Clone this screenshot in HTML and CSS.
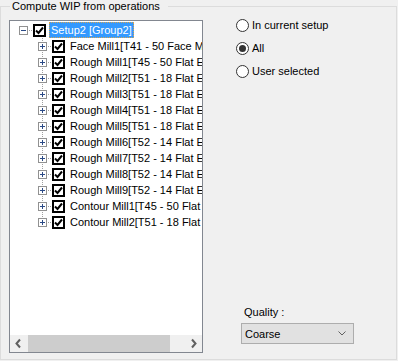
FILE: index.html
```html
<!DOCTYPE html>
<html>
<head>
<meta charset="utf-8">
<link rel="stylesheet" href="styles.css">
</head>
<body>
<fieldset class="group">
  <legend class="group-title">Compute WIP from operations</legend>
  <div class="group-body">
    <div class="tree">
      <div class="tree-view">
        <div class="node root">
          <span class="exp-cell"><svg class="exp" width="9" height="9" viewBox="0 0 9 9"><rect x="0.5" y="0.5" width="8" height="8" fill="#fff" stroke="#919191"/><path d="M2 4.5h5" stroke="#2b4a86"/></svg></span>
          <span class="conn"></span>
          <span class="check"><svg width="9" height="9" viewBox="0 0 9 9"><path d="M1 4.5 L3.5 7 L8 1.5" fill="none" stroke="#000" stroke-width="2"/></svg></span>
          <span class="label selected">Setup2 [Group2]</span>
        </div>
        <div class="children">
          <div class="node child">
            <span class="exp-cell line"><svg class="exp" width="9" height="9" viewBox="0 0 9 9"><rect x="0.5" y="0.5" width="8" height="8" fill="#fff" stroke="#919191"/><path d="M2 4.5h5M4.5 2v5" stroke="#2b4a86"/></svg></span>
            <span class="conn"></span>
            <span class="check"><svg width="9" height="9" viewBox="0 0 9 9"><path d="M1 4.5 L3.5 7 L8 1.5" fill="none" stroke="#000" stroke-width="2"/></svg></span>
            <span class="label">Face Mill1[T41 - 50 Face Mill]</span>
          </div>
          <div class="node child">
            <span class="exp-cell line"><svg class="exp" width="9" height="9" viewBox="0 0 9 9"><rect x="0.5" y="0.5" width="8" height="8" fill="#fff" stroke="#919191"/><path d="M2 4.5h5M4.5 2v5" stroke="#2b4a86"/></svg></span>
            <span class="conn"></span>
            <span class="check"><svg width="9" height="9" viewBox="0 0 9 9"><path d="M1 4.5 L3.5 7 L8 1.5" fill="none" stroke="#000" stroke-width="2"/></svg></span>
            <span class="label">Rough Mill1[T45 - 50 Flat End Mill]</span>
          </div>
          <div class="node child">
            <span class="exp-cell line"><svg class="exp" width="9" height="9" viewBox="0 0 9 9"><rect x="0.5" y="0.5" width="8" height="8" fill="#fff" stroke="#919191"/><path d="M2 4.5h5M4.5 2v5" stroke="#2b4a86"/></svg></span>
            <span class="conn"></span>
            <span class="check"><svg width="9" height="9" viewBox="0 0 9 9"><path d="M1 4.5 L3.5 7 L8 1.5" fill="none" stroke="#000" stroke-width="2"/></svg></span>
            <span class="label">Rough Mill2[T51 - 18 Flat End Mill]</span>
          </div>
          <div class="node child">
            <span class="exp-cell line"><svg class="exp" width="9" height="9" viewBox="0 0 9 9"><rect x="0.5" y="0.5" width="8" height="8" fill="#fff" stroke="#919191"/><path d="M2 4.5h5M4.5 2v5" stroke="#2b4a86"/></svg></span>
            <span class="conn"></span>
            <span class="check"><svg width="9" height="9" viewBox="0 0 9 9"><path d="M1 4.5 L3.5 7 L8 1.5" fill="none" stroke="#000" stroke-width="2"/></svg></span>
            <span class="label">Rough Mill3[T51 - 18 Flat End Mill]</span>
          </div>
          <div class="node child">
            <span class="exp-cell line"><svg class="exp" width="9" height="9" viewBox="0 0 9 9"><rect x="0.5" y="0.5" width="8" height="8" fill="#fff" stroke="#919191"/><path d="M2 4.5h5M4.5 2v5" stroke="#2b4a86"/></svg></span>
            <span class="conn"></span>
            <span class="check"><svg width="9" height="9" viewBox="0 0 9 9"><path d="M1 4.5 L3.5 7 L8 1.5" fill="none" stroke="#000" stroke-width="2"/></svg></span>
            <span class="label">Rough Mill4[T51 - 18 Flat End Mill]</span>
          </div>
          <div class="node child">
            <span class="exp-cell line"><svg class="exp" width="9" height="9" viewBox="0 0 9 9"><rect x="0.5" y="0.5" width="8" height="8" fill="#fff" stroke="#919191"/><path d="M2 4.5h5M4.5 2v5" stroke="#2b4a86"/></svg></span>
            <span class="conn"></span>
            <span class="check"><svg width="9" height="9" viewBox="0 0 9 9"><path d="M1 4.5 L3.5 7 L8 1.5" fill="none" stroke="#000" stroke-width="2"/></svg></span>
            <span class="label">Rough Mill5[T51 - 18 Flat End Mill]</span>
          </div>
          <div class="node child">
            <span class="exp-cell line"><svg class="exp" width="9" height="9" viewBox="0 0 9 9"><rect x="0.5" y="0.5" width="8" height="8" fill="#fff" stroke="#919191"/><path d="M2 4.5h5M4.5 2v5" stroke="#2b4a86"/></svg></span>
            <span class="conn"></span>
            <span class="check"><svg width="9" height="9" viewBox="0 0 9 9"><path d="M1 4.5 L3.5 7 L8 1.5" fill="none" stroke="#000" stroke-width="2"/></svg></span>
            <span class="label">Rough Mill6[T52 - 14 Flat End Mill]</span>
          </div>
          <div class="node child">
            <span class="exp-cell line"><svg class="exp" width="9" height="9" viewBox="0 0 9 9"><rect x="0.5" y="0.5" width="8" height="8" fill="#fff" stroke="#919191"/><path d="M2 4.5h5M4.5 2v5" stroke="#2b4a86"/></svg></span>
            <span class="conn"></span>
            <span class="check"><svg width="9" height="9" viewBox="0 0 9 9"><path d="M1 4.5 L3.5 7 L8 1.5" fill="none" stroke="#000" stroke-width="2"/></svg></span>
            <span class="label">Rough Mill7[T52 - 14 Flat End Mill]</span>
          </div>
          <div class="node child">
            <span class="exp-cell line"><svg class="exp" width="9" height="9" viewBox="0 0 9 9"><rect x="0.5" y="0.5" width="8" height="8" fill="#fff" stroke="#919191"/><path d="M2 4.5h5M4.5 2v5" stroke="#2b4a86"/></svg></span>
            <span class="conn"></span>
            <span class="check"><svg width="9" height="9" viewBox="0 0 9 9"><path d="M1 4.5 L3.5 7 L8 1.5" fill="none" stroke="#000" stroke-width="2"/></svg></span>
            <span class="label">Rough Mill8[T52 - 14 Flat End Mill]</span>
          </div>
          <div class="node child">
            <span class="exp-cell line"><svg class="exp" width="9" height="9" viewBox="0 0 9 9"><rect x="0.5" y="0.5" width="8" height="8" fill="#fff" stroke="#919191"/><path d="M2 4.5h5M4.5 2v5" stroke="#2b4a86"/></svg></span>
            <span class="conn"></span>
            <span class="check"><svg width="9" height="9" viewBox="0 0 9 9"><path d="M1 4.5 L3.5 7 L8 1.5" fill="none" stroke="#000" stroke-width="2"/></svg></span>
            <span class="label">Rough Mill9[T52 - 14 Flat End Mill]</span>
          </div>
          <div class="node child">
            <span class="exp-cell line"><svg class="exp" width="9" height="9" viewBox="0 0 9 9"><rect x="0.5" y="0.5" width="8" height="8" fill="#fff" stroke="#919191"/><path d="M2 4.5h5M4.5 2v5" stroke="#2b4a86"/></svg></span>
            <span class="conn"></span>
            <span class="check"><svg width="9" height="9" viewBox="0 0 9 9"><path d="M1 4.5 L3.5 7 L8 1.5" fill="none" stroke="#000" stroke-width="2"/></svg></span>
            <span class="label">Contour Mill1[T45 - 50 Flat End Mill]</span>
          </div>
          <div class="node child">
            <span class="exp-cell line last"><svg class="exp" width="9" height="9" viewBox="0 0 9 9"><rect x="0.5" y="0.5" width="8" height="8" fill="#fff" stroke="#919191"/><path d="M2 4.5h5M4.5 2v5" stroke="#2b4a86"/></svg></span>
            <span class="conn"></span>
            <span class="check"><svg width="9" height="9" viewBox="0 0 9 9"><path d="M1 4.5 L3.5 7 L8 1.5" fill="none" stroke="#000" stroke-width="2"/></svg></span>
            <span class="label">Contour Mill2[T51 - 18 Flat End Mill]</span>
          </div>
        </div>
      </div>
      <div class="hscroll">
        <span class="sb-btn"><svg width="17" height="17" viewBox="0 0 17 17"><path d="M10 4.5 L6.5 8.5 L10 12.5" fill="none" stroke="#606060" stroke-width="2"/></svg></span>
        <span class="sb-track"><span class="sb-thumb"></span></span>
        <span class="sb-btn"><svg width="17" height="17" viewBox="0 0 17 17"><path d="M7 4.5 L10.5 8.5 L7 12.5" fill="none" stroke="#606060" stroke-width="2"/></svg></span>
      </div>
    </div>
    <div class="options">
      <div class="radios">
        <div class="radio"><svg class="radio-dot" width="13" height="13" viewBox="0 0 13 13"><circle cx="6.5" cy="6.5" r="6" fill="#fff" stroke="#333"/></svg><span>In current setup</span></div>
        <div class="radio"><svg class="radio-dot" width="13" height="13" viewBox="0 0 13 13"><circle cx="6.5" cy="6.5" r="6" fill="#fff" stroke="#333"/><circle cx="6.5" cy="6.5" r="3.5" fill="#333"/></svg><span>All</span></div>
        <div class="radio"><svg class="radio-dot" width="13" height="13" viewBox="0 0 13 13"><circle cx="6.5" cy="6.5" r="6" fill="#fff" stroke="#333"/></svg><span>User selected</span></div>
      </div>
      <div class="quality">
        <div class="quality-label">Quality :</div>
        <div class="combo"><span>Coarse</span><svg width="8" height="5" viewBox="0 0 8 5"><path d="M0.5 0.5 L4 4 L7.5 0.5" fill="none" stroke="#606060"/></svg></div>
      </div>
    </div>
  </div>
</fieldset>
</body>
</html>
```

FILE: styles.css
```css
html, body {
  margin: 0;
  padding: 0;
  background: #f0f0f0;
}
body {
  font-family: "Liberation Sans", Arial, sans-serif;
  font-size: 11px;
  color: #000;
  width: 398px;
  height: 361px;
  overflow: hidden;
}
.group {
  box-sizing: border-box;
  width: 397px;
  margin: 0;
  padding: 7px 0 6px 8px;
  border: 1px solid #dcdcdc;
}
.group-title {
  margin-left: 1px;
  padding: 0 8px 0 2px;
  line-height: 13px;
  height: 13px;
}
.group-body {
  display: flex;
}
.tree {
  box-sizing: border-box;
  width: 194px;
  height: 333px;
  border: 1px solid #828790;
  background: #fff;
  display: flex;
  flex-direction: column;
}
.tree-view {
  flex: 1;
  overflow: hidden;
  padding-top: 1px;
}
.node {
  display: flex;
  height: 16px;
  white-space: nowrap;
}
.root {
  padding-left: 9px;
}
.children {
  padding-left: 28px;
}
.exp-cell {
  flex: none;
  width: 9px;
  height: 16px;
}
.exp {
  display: block;
  margin-top: 4px;
}
.exp-cell.line {
  background-image: repeating-linear-gradient(to bottom, #a0a0a0 0 1px, transparent 1px 2px);
  background-size: 1px 16px;
  background-position: 4px 0;
  background-repeat: no-repeat;
}
.exp-cell.line.last {
  background-size: 1px 8px;
}
.conn {
  flex: none;
  width: 5px;
  height: 16px;
  background-image: repeating-linear-gradient(to right, #a0a0a0 0 1px, transparent 1px 2px);
  background-size: 5px 1px;
  background-position: 1px 8px;
  background-repeat: no-repeat;
}
.check {
  flex: none;
  box-sizing: border-box;
  width: 13px;
  height: 13px;
  margin-top: 2px;
  border: 2px solid #000;
  background: #fff;
}
.check svg {
  display: block;
}
.label {
  flex: none;
  box-sizing: border-box;
  margin-left: 3px;
  padding: 0 2px;
  height: 16px;
  line-height: 16px;
}
.label.selected {
  background: #3399ff;
  color: #fff;
  line-height: 14px;
  padding: 0 1px;
  border: 1px dotted #d9a550;
}
.hscroll {
  flex: none;
  display: flex;
  height: 17px;
  background: #f0f0f0;
}
.sb-btn {
  flex: none;
  width: 17px;
  height: 17px;
}
.sb-btn svg {
  display: block;
}
.sb-track {
  flex: 1;
  display: flex;
}
.sb-thumb {
  margin-left: 1px;
  width: 142px;
  background: #cdcdcd;
}
.options {
  flex: 1;
  display: flex;
  flex-direction: column;
}
.radios {
  margin-top: -1px;
  padding-left: 33px;
  display: flex;
  flex-direction: column;
  gap: 10px;
}
.radio {
  display: flex;
  align-items: center;
  height: 13px;
  line-height: 13px;
}
.radio-dot {
  flex: none;
  margin-right: 3px;
}
.quality {
  margin-top: auto;
  margin-bottom: 9px;
  padding-left: 38px;
}
.quality-label {
  padding-left: 3px;
  line-height: 13px;
  margin-bottom: 4px;
}
.combo {
  box-sizing: border-box;
  width: 113px;
  height: 21px;
  border: 1px solid #adadad;
  background: #e1e1e1;
  display: flex;
  align-items: center;
  justify-content: space-between;
  padding: 0 7px 0 3px;
}
.combo svg {
  display: block;
}
```
